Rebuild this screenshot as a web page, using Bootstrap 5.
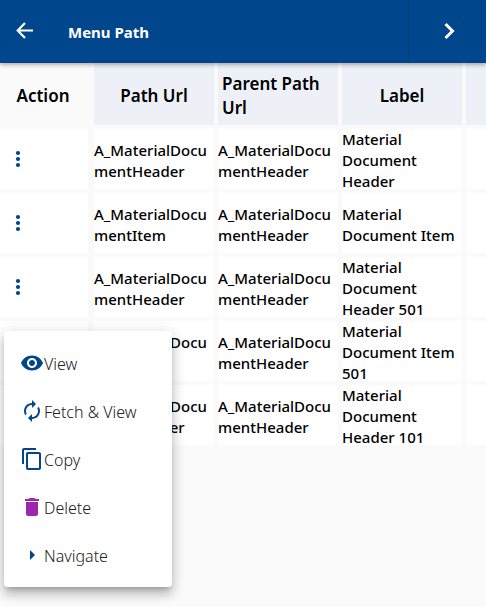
<!DOCTYPE html>
<html lang="en">
<head>
<meta charset="utf-8">
<meta name="viewport" content="width=device-width, initial-scale=1">
<title>Menu Path</title>
<link href="https://cdn.jsdelivr.net/npm/bootstrap@5.3.0/dist/css/bootstrap.min.css" rel="stylesheet">
<style>
  body { background: #fafafa; color: #000; font-family: "Noto Sans", "Open Sans", sans-serif; font-size: 15px; }
  .topbar { background: #00468c; height: 63px; box-shadow: 0 2px 4px rgba(0,0,0,.3); z-index: 2; }
  .topbar button { color: #fff; }
  .topbar h1 { font-size: 15px; font-weight: 700; }
  .back-btn { width: 48px; }
  .next-btn { width: 78px; padding: 0 0 2px 4px; border-left: 1px solid #083b75 !important; }
  .grid-wrap { overflow: hidden; }
  .path-grid { table-layout: fixed; width: 714px; margin-left: -4px; border-collapse: separate; border-spacing: 4px 0; }
  .path-grid th { height: 66px; padding: 4px 4px 0; background: #edf1f7; border-bottom: 4px solid #fafafa; font-size: 17px; font-weight: 600; line-height: 24px; text-align: center; vertical-align: middle; }
  .path-grid th:first-child { background: #fafafa; padding-right: 8px; }
  .path-grid th.wraps { text-align: left; }
  .path-grid td { height: 64px; padding: 0 0 1px; background: #fff; box-shadow: inset 0 -4px 0 #fafafa; font-weight: 500; line-height: 21px; vertical-align: middle; }
  .path-grid td:first-child { border-right: 2px solid #fafafa; padding-bottom: 4px; }
  .breaks { word-break: break-all; }
  .more-btn { width: 36px; height: 36px; color: #00468c; }
  .action-menu { top: 331px; left: 4px; width: 168px; border-radius: 4px; box-shadow: 0 5px 5px -3px rgba(0,0,0,.2), 0 8px 10px 1px rgba(0,0,0,.14), 0 3px 14px 2px rgba(0,0,0,.12); z-index: 3; }
  .action-menu button { height: 48px; padding-left: 16px; color: #00468c; }
  .action-menu span { color: #212121; font-size: 16px; font-weight: 300; padding-top: 2px; }
  .action-menu .trash { color: #9c27b0; }
</style>
<script src="https://cdn.jsdelivr.net/npm/bootstrap@5.3.0/dist/js/bootstrap.bundle.min.js"></script>
</head>
<body class="position-relative min-vh-100">
<header class="topbar d-flex align-items-stretch position-relative">
  <button class="back-btn border-0 bg-transparent p-0 pb-1" type="button" aria-label="Back">
    <svg width="24" height="24" viewBox="0 0 24 24" fill="none" stroke="currentColor" stroke-width="2.2"><path d="M21 12.500H6M13 5L5.700 12.500l7.300 7.500"/></svg>
  </button>
  <h1 class="text-white m-0 ms-3 ps-1 flex-grow-1 align-self-center">Menu Path</h1>
  <button class="next-btn border-0 bg-transparent" type="button" aria-label="Next">
    <svg width="24" height="24" viewBox="0 0 24 24" fill="none" stroke="currentColor" stroke-width="3"><path d="M7.500 5l7 7-7 7"/></svg>
  </button>
</header>

<main class="grid-wrap">
  <table class="path-grid">
    <colgroup><col style="width:90px"><col style="width:120px"><col style="width:120px"><col style="width:120px"><col></colgroup>
    <thead>
      <tr><th scope="col">Action</th><th scope="col">Path Url</th><th scope="col" class="wraps">Parent Path Url</th><th scope="col">Label</th><th></th></tr>
    </thead>
    <tbody>
      <tr><td><button class="more-btn d-block border-0 bg-transparent p-0" type="button" aria-label="Actions"><svg width="24" height="24" viewBox="0 0 24 24" fill="currentColor"><circle cx="12" cy="6" r="2.100"/><circle cx="12" cy="12" r="2.100"/><circle cx="12" cy="18" r="2.100"/></svg></button></td><td class="breaks">A_MaterialDocumentHeader</td><td class="breaks">A_MaterialDocumentHeader</td><td>Material Document Header</td><td></td></tr>
      <tr><td><button class="more-btn d-block border-0 bg-transparent p-0" type="button" aria-label="Actions"><svg width="24" height="24" viewBox="0 0 24 24" fill="currentColor"><circle cx="12" cy="6" r="2.100"/><circle cx="12" cy="12" r="2.100"/><circle cx="12" cy="18" r="2.100"/></svg></button></td><td class="breaks">A_MaterialDocumentItem</td><td class="breaks">A_MaterialDocumentHeader</td><td>Material Document Item</td><td></td></tr>
      <tr><td><button class="more-btn d-block border-0 bg-transparent p-0" type="button" aria-label="Actions"><svg width="24" height="24" viewBox="0 0 24 24" fill="currentColor"><circle cx="12" cy="6" r="2.100"/><circle cx="12" cy="12" r="2.100"/><circle cx="12" cy="18" r="2.100"/></svg></button></td><td class="breaks">A_MaterialDocumentHeader</td><td class="breaks">A_MaterialDocumentHeader</td><td>Material Document Header 501</td><td></td></tr>
      <tr><td></td><td class="breaks">A_MaterialDocumentItem</td><td class="breaks">A_MaterialDocumentHeader</td><td>Material Document Item 501</td><td></td></tr>
      <tr><td></td><td class="breaks">A_MaterialDocumentHeader</td><td class="breaks">A_MaterialDocumentHeader</td><td>Material Document Header 101</td><td></td></tr>
    </tbody>
  </table>
</main>

<div class="action-menu position-absolute bg-white py-2">
  <button type="button" class="d-flex align-items-center w-100 border-0 bg-transparent"><svg width="24" height="24" viewBox="0 0 24 24" fill="currentColor"><path d="M12 4.500C7 4.500 2.730 7.610 1 12c1.730 4.390 6 7.500 11 7.500s9.270-3.110 11-7.500c-1.730-4.390-6-7.500-11-7.500zM12 17c-2.760 0-5-2.240-5-5s2.240-5 5-5 5 2.240 5 5-2.240 5-5 5zm0-8c-1.660 0-3 1.340-3 3s1.340 3 3 3 3-1.340 3-3-1.340-3-3-3z"/></svg><span>View</span></button>
  <button type="button" class="d-flex align-items-center w-100 border-0 bg-transparent"><svg width="24" height="24" viewBox="0 0 24 24" fill="currentColor"><path d="M12 6v3l4-4-4-4v3c-4.420 0-8 3.580-8 8 0 1.570.460 3.030 1.240 4.260L6.700 14.800c-.450-.830-.700-1.790-.700-2.800 0-3.310 2.690-6 6-6zm6.760 1.740L17.300 9.200c.440.840.700 1.790.700 2.800 0 3.310-2.690 6-6 6v-3l-4 4 4 4v-3c4.420 0 8-3.580 8-8 0-1.570-.460-3.030-1.240-4.260z"/></svg><span>Fetch &amp; View</span></button>
  <button type="button" class="d-flex align-items-center w-100 border-0 bg-transparent"><svg width="24" height="24" viewBox="0 0 24 24" fill="currentColor"><path d="M16 1H4c-1.100 0-2 .900-2 2v14h2V3h12V1zm3 4H8c-1.100 0-2 .900-2 2v14c0 1.100.900 2 2 2h11c1.100 0 2-.900 2-2V7c0-1.100-.900-2-2-2zm0 16H8V7h11v14z"/></svg><span>Copy</span></button>
  <button type="button" class="d-flex align-items-center w-100 border-0 bg-transparent"><svg class="trash" width="24" height="24" viewBox="0 0 24 24" fill="currentColor"><path d="M6 19c0 1.100.900 2 2 2h8c1.100 0 2-.900 2-2V7H6v12zM19 4h-3.500l-1-1h-5l-1 1H5v2h14V4z"/></svg><span>Delete</span></button>
  <button type="button" class="d-flex align-items-center w-100 border-0 bg-transparent"><svg width="24" height="24" viewBox="0 0 24 24" fill="currentColor"><path d="M10 17l5-5-5-5v10z"/></svg><span>Navigate</span></button>
</div>
</body>
</html>
